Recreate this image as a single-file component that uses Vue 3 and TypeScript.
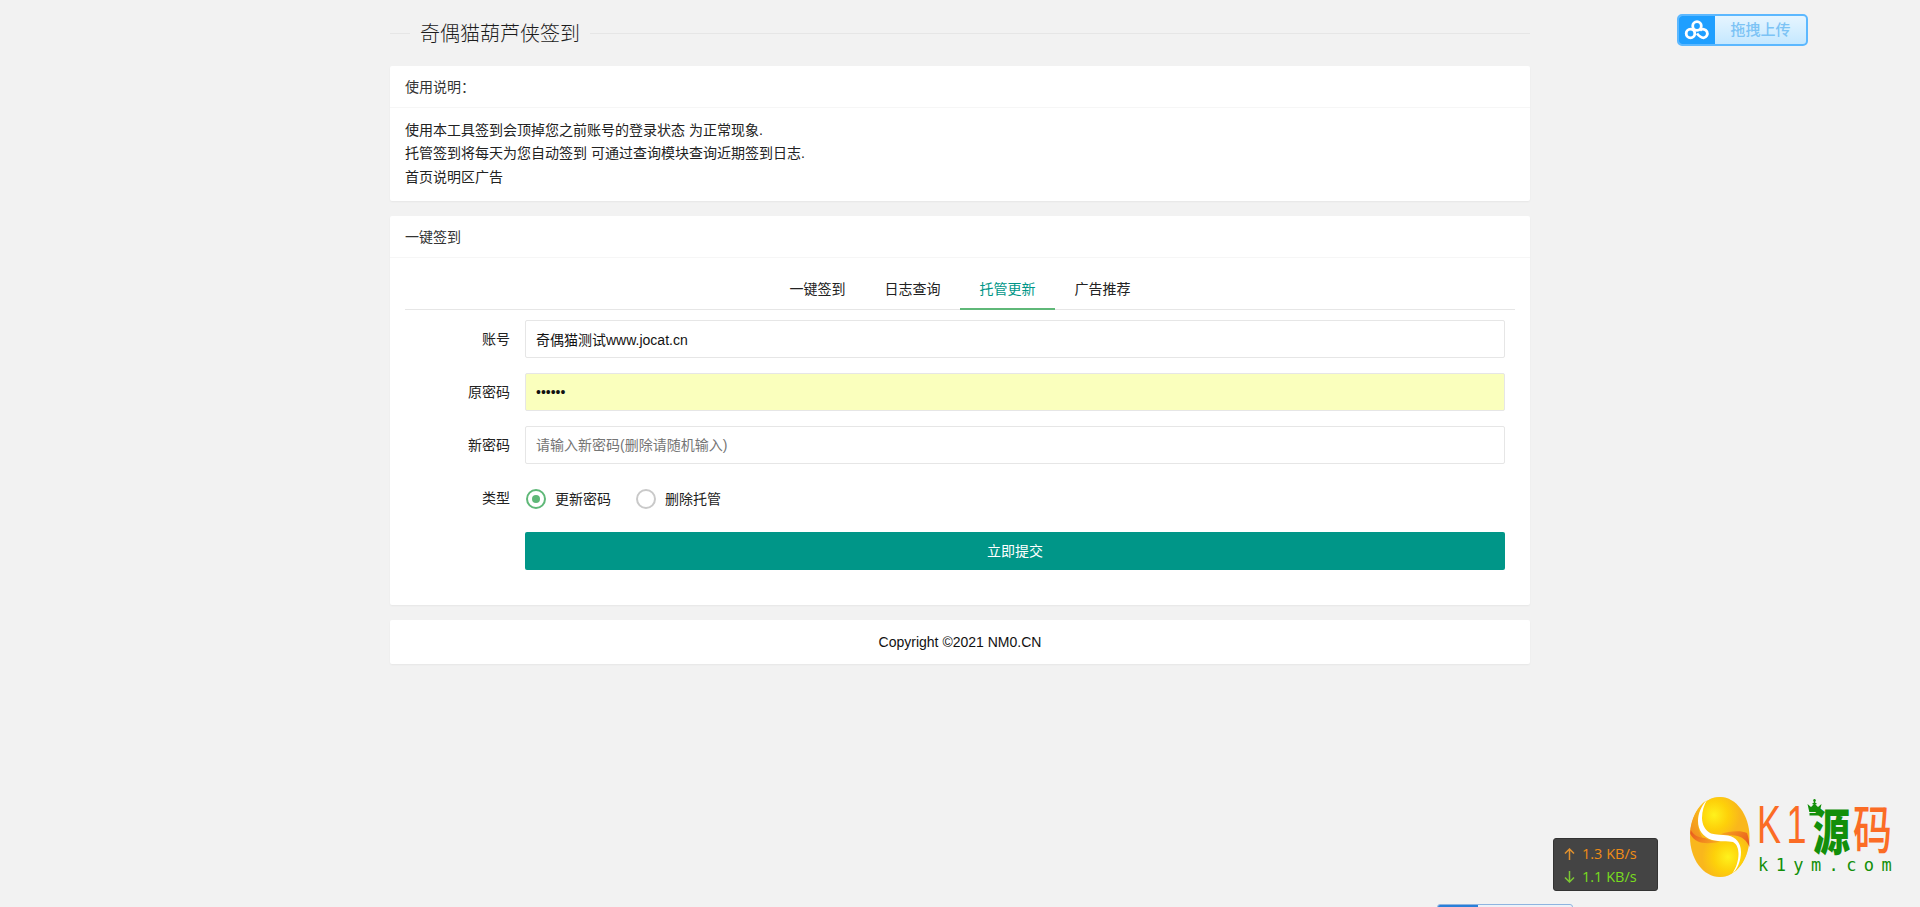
<script setup lang="ts">
const tabs: string[] = ['一键签到', '日志查询', '托管更新', '广告推荐']
const notes: string[] = [
  '使用本工具签到会顶掉您之前账号的登录状态 为正常现象.',
  '托管签到将每天为您自动签到 可通过查询模块查询近期签到日志.',
  '首页说明区广告',
]
</script>

<template>
  <div class="page">
    <main class="container">
      <fieldset class="title"><legend>奇偶猫葫芦侠签到</legend></fieldset>

      <section class="panel">
        <header class="panel-head">使用说明：</header>
        <div class="notes">
          <p v-for="n in notes" :key="n">{{ n }}</p>
        </div>
      </section>

      <section class="panel">
        <header class="panel-head">一键签到</header>
        <div class="panel-body">
          <ul class="tabs">
            <li v-for="(t, i) in tabs" :key="t" :class="{ active: i === 2 }">{{ t }}</li>
          </ul>
          <form class="form" @submit.prevent>
            <label class="lab">账号</label>
            <input class="inp" type="text" value="奇偶猫测试www.jocat.cn" />
            <label class="lab">原密码</label>
            <input class="inp filled" type="password" value="123456" />
            <label class="lab">新密码</label>
            <input class="inp" type="text" placeholder="请输入新密码(删除请随机输入)" />
            <label class="lab type-lab">类型</label>
            <div class="radios">
              <span class="radio on"><i></i>更新密码</span>
              <span class="radio"><i></i>删除托管</span>
            </div>
            <span></span>
            <button class="submit" type="button">立即提交</button>
          </form>
        </div>
      </section>

      <section class="panel foot">Copyright ©2021 NM0.CN</section>
    </main>

    <div class="upload">
      <span class="upload-icon">
        <svg width="26" height="20" viewBox="0 0 26 20" fill="none" stroke="#fff" stroke-width="2.8">
          <circle cx="13" cy="6" r="4.3" />
          <circle cx="6.500" cy="13.500" r="4.300" />
          <path d="M16 10.500A4.300 4.300 0 1 1 19.500 17.800C17 17.800 15 16 13 13.500" />
        </svg>
      </span>
      <span class="upload-text">拖拽上传</span>
    </div>

    <div class="speed">
      <div class="up">
        <svg width="11" height="12" viewBox="0 0 11 12" fill="none" stroke="#e0912e" stroke-width="1.500"><path d="M5.500 12V1M1 5.500L5.500 1L10 5.500" /></svg>
        <span>1.3 KB/s</span>
      </div>
      <div class="down">
        <svg width="11" height="12" viewBox="0 0 11 12" fill="none" stroke="#7cc832" stroke-width="1.500"><path d="M5.500 0V11M1 6.500L5.500 11L10 6.500" /></svg>
        <span>1.1 KB/s</span>
      </div>
    </div>

    <div class="logo">
      <svg class="egg" width="60" height="80" viewBox="0 0 60 80">
        <defs>
          <radialGradient id="g1" gradientUnits="userSpaceOnUse" cx="24" cy="18" r="26">
            <stop offset="0" stop-color="#fff21c" />
            <stop offset="0.55" stop-color="#fed308" stop-opacity="0.9" />
            <stop offset="1" stop-color="#fed308" stop-opacity="0" />
          </radialGradient>
          <radialGradient id="g2" gradientUnits="userSpaceOnUse" cx="38" cy="60" r="26">
            <stop offset="0" stop-color="#fff21c" />
            <stop offset="0.55" stop-color="#fed308" stop-opacity="0.9" />
            <stop offset="1" stop-color="#fed308" stop-opacity="0" />
          </radialGradient>
          <linearGradient id="o1" x1="0" y1="0" x2="1" y2="0.4">
            <stop offset="0" stop-color="#e9571f" />
            <stop offset="1" stop-color="#f6a01f" />
          </linearGradient>
          <linearGradient id="o2" x1="0" y1="0.300" x2="1" y2="0.800">
            <stop offset="0" stop-color="#f6a01f" />
            <stop offset="1" stop-color="#e9571f" />
          </linearGradient>
          <linearGradient id="c1" x1="0.700" y1="0" x2="0.200" y2="1">
            <stop offset="0" stop-color="#fdc818" />
            <stop offset="1" stop-color="#f08a20" />
          </linearGradient>
        </defs>
        <path d="M30 0C46 0 59.500 18 59.500 40C59.500 62 46 80 30 80C13 80 0 62 0 40C0 18 13 0 30 0Z" fill="#f9b71c" />
        <path d="M30 0C46 0 59.500 18 59.500 40C59.500 62 46 80 30 80C13 80 0 62 0 40C0 18 13 0 30 0Z" fill="url(#g1)" />
        <path d="M30 0C46 0 59.500 18 59.500 40C59.500 62 46 80 30 80C13 80 0 62 0 40C0 18 13 0 30 0Z" fill="url(#g2)" />
        <path d="M17 3C7 9 1 22 0 36C3 40 8 43 14 43C10 38 8 31 8 24C8 17 11 9 17 3Z" fill="url(#c1)" />
        <path d="M0.800 33C3 38 9 41 15 41C18 43 23 44 30 44.500C23 46.500 13 47 8 44.500C4 43 2 40 0.300 37Z" fill="url(#o1)" />
        <path d="M30 37.500C38 34.500 50 33 57 36C58.500 40 59.300 44 59.500 50C57 44 52 39 45 38.500C40 38 35 38 30 37.500Z" fill="url(#o2)" />
        <path d="M17 3C11 9 8 17 8 24C8 33 13 40 22 43C30 45 38 44 43 45C47 47 48.500 52 48.500 57C48.500 64 46 71 42 77C47 73 51 64 51 55C51 46 46 40 38 38.500C32 37.500 26 38 21 36.500C15 34 12 27 12 21C12 14 14 8 17 3Z" fill="#fff" />
      </svg>
      <div class="brand">
        <div class="brand-top">
          <span class="k1"><span class="k1-in">K1</span></span>
          <span class="cn green"><span>源</span></span>
          <span class="cn orange"><span>码</span></span>
          <svg class="crown" width="15" height="17" viewBox="0 0 15 17" fill="#138f0a">
            <circle cx="7.500" cy="1.200" r="1.200" />
            <path d="M6.700 2h1.600v3h-1.600zM5.500 4h4v1.200h-4zM0.500 5l3.500 3 3.500-3.500 3.500 3.500 3.500-3-1.800 8H2.300z" />
            <path d="M2.500 14h10v2.500h-10z" />
          </svg>
        </div>
        <div class="domain">k1ym.com</div>
      </div>
    </div>

    <div class="progress"><span></span></div>
  </div>
</template>

<style>
html, body { margin: 0; background: #f2f2f2; }
</style>

<style scoped>
.page {
  position: relative;
  height: 907px;
  overflow: hidden;
  background: #f2f2f2;
  font: 14px/1.5 "Liberation Sans", "Noto Sans CJK SC", sans-serif;
  color: #333;
}
.container { width: 1140px; margin: 0 auto; padding-top: 20px; }
.title {
  margin: 0;
  padding: 0;
  height: 46px;
  border: 0;
  border-top: 1px solid #e6e6e6;
  box-sizing: border-box;
}
.title legend {
  margin-left: 20px;
  padding: 2px 10px 0;
  font-size: 20px;
  font-weight: 300;
  line-height: 24px;
  color: #1c1c1c;
}
.panel {
  background: #fff;
  border-radius: 2px;
  box-shadow: 0 1px 2px rgba(0, 0, 0, .05);
  margin-bottom: 15px;
}
.panel-head {
  height: 42px;
  line-height: 42px;
  padding: 0 15px;
  border-bottom: 1px solid #f6f6f6;
  box-sizing: border-box;
}
.notes { padding: 11px 15px 0; height: 93px; box-sizing: border-box; color: #222; }
.notes p { margin: 0; line-height: 23.300px; }
.panel-body { padding: 10px 15px 0; height: 347px; box-sizing: border-box; }
.tabs {
  list-style: none;
  margin: 0 0 10px;
  padding: 0;
  height: 42px;
  box-sizing: border-box;
  display: flex;
  justify-content: center;
  border-bottom: 1px solid #e6e6e6;
}
.tabs li {
  padding: 0 19.500px;
  height: 42px;
  line-height: 42px;
  box-sizing: border-box;
  color: #222;
}
.tabs li.active { color: #009688; border-bottom: 2px solid #5fb878; }
.form {
  display: grid;
  grid-template-columns: 105px 980px;
  column-gap: 15px;
  row-gap: 15px;
  align-items: center;
}
.lab { text-align: right; color: #222; }
.type-lab { padding-top: 1px; }
.inp {
  height: 38px;
  width: 100%;
  box-sizing: border-box;
  border: 1px solid #e6e6e6;
  border-radius: 2px;
  padding: 0 10px;
  font: inherit;
  color: #111;
  background: #fff;
  outline: none;
}
.filled { background: #faffbd; }
.radios { display: flex; height: 38px; align-items: center; padding-top: 2px; box-sizing: border-box; }
.radio { display: flex; align-items: center; margin-right: 25px; color: #222; }
.radio i {
  width: 20px;
  height: 20px;
  box-sizing: border-box;
  border: 2px solid #c9c9c9;
  border-radius: 50%;
  margin: 0 9px 0 1px;
  display: flex;
  align-items: center;
  justify-content: center;
}
.radio + .radio i { margin-left: 0; }
.radio.on i { border-color: #5fb878; }
.radio.on i::after {
  content: "";
  width: 8px;
  height: 8px;
  border-radius: 50%;
  background: #5fb878;
}
.submit {
  height: 38px;
  border: 0;
  border-radius: 2px;
  background: #009688;
  color: #fff;
  font: inherit;
  padding: 0;
}
.foot {
  height: 44px;
  line-height: 44px;
  text-align: center;
  color: #111;
}
.upload {
  position: absolute;
  left: 1677px;
  top: 14px;
  width: 131px;
  height: 32px;
  box-sizing: border-box;
  border: 2px solid #5cb8ff;
  border-radius: 5px;
  display: flex;
  overflow: hidden;
  background: linear-gradient(#e6f5ff, #c5e8ff);
}
.upload-icon {
  width: 36px;
  background: #1f9fff;
  display: flex;
  align-items: center;
  justify-content: center;
}
.upload-text { flex: 1; text-align: center; line-height: 28px; color: #7cc3f5; font-size: 15px; font-weight: 500; }
.speed {
  position: absolute;
  left: 1553px;
  top: 838px;
  width: 105px;
  height: 53px;
  box-sizing: border-box;
  background: #444;
  border: 1px solid #333;
  border-radius: 3px;
  padding: 3px 0 0 10px;
  font: 400 14.500px/23px "Open Sans", sans-serif;
}
.up, .down { display: flex; align-items: center; gap: 7px; }
.up { color: #f08c16; }
.down { color: #78dc1e; }
.logo { position: absolute; left: 1690px; top: 797px; display: flex; }
.brand { margin-left: 10px; position: relative; width: 136px; }
.brand-top { display: flex; align-items: flex-start; height: 58px; position: relative; }
.k1 { width: 53px; height: 58px; }
.k1-in {
  display: block;
  font: 400 53px/56px "Liberation Sans", sans-serif;
  color: #fb6c25;
  transform: scaleX(.68);
  transform-origin: left;
  letter-spacing: 8px;
  margin-left: -3px;
  width: 78px;
  white-space: nowrap;
}
.cn { height: 58px; display: block; font-family: "Noto Sans CJK SC", sans-serif; }
.cn span { display: block; transform-origin: left; padding-top: 4px; }
.green { width: 40px; color: #138f0a; font-weight: 900; }
.green span { font-size: 50px; line-height: 54px; width: 50px; transform: scaleX(.74); }
.orange { width: 38px; color: #fb6c25; font-weight: 500; }
.orange span { font-size: 52px; line-height: 52px; width: 52px; transform: scaleX(.75); }
.crown { position: absolute; left: 47px; top: 2px; }
.domain {
  color: #138f0a;
  font: 17px/20px "DejaVu Sans Mono", monospace;
  letter-spacing: 7.400px;
  margin-left: -2px;
  white-space: nowrap;
}
.progress {
  position: absolute;
  left: 1437px;
  top: 904px;
  width: 136px;
  height: 6px;
  box-sizing: border-box;
  border: 1px solid #8eb4e0;
  border-radius: 3px;
  background: #eef2f8;
  overflow: hidden;
}
.progress span { display: block; width: 40px; height: 100%; background: #2a7fd8; }
</style>
